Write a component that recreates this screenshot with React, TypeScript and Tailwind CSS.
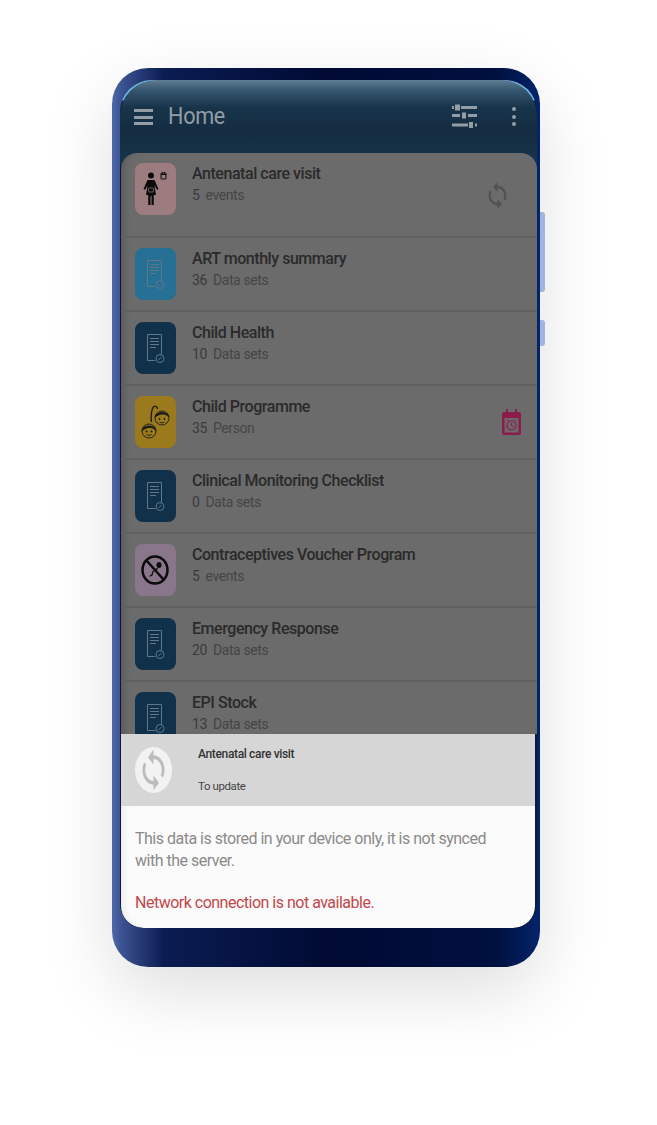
import React from 'react';

const SYNC_PATH =
  'M12 4V1L8 5l4 4V6c3.31 0 6 2.69 6 6 0 1.01-.25 1.97-.7 2.8l1.46 1.46C19.54 15.03 20 13.57 20 12c0-4.42-3.58-8-8-8zm0 14c-3.31 0-6-2.69-6-6 0-1.01.25-1.97.7-2.8L5.24 7.74C4.46 8.97 4 10.43 4 12c0 4.42 3.58 8 8 8v3l4-4-4-4v3z';

const SyncIcon = ({ className }: { className: string }) => (
  <svg viewBox="0 0 24 24" preserveAspectRatio="none" className={className} fill="currentColor">
    <path d={SYNC_PATH} />
  </svg>
);

const DocIcon = () => (
  <svg viewBox="0 0 41 52" className="w-full h-full" fill="none" stroke="#5f7789" strokeWidth="1">
    <path d="M12.500 12.500h14v20M20.500 38.500h-8v-26" />
    <path d="M15 16.500h9M15 19.500h9M15 22.500h9M15 25.500h6" strokeWidth="1.100" />
    <circle cx="25" cy="36.500" r="4" />
    <path d="M23.500 38l3-3" />
  </svg>
);

const WomanIcon = () => (
  <svg viewBox="0 0 41 52" className="w-full h-full">
    <circle cx="16" cy="12.500" r="3" fill="#0b0b0b" />
    <path
      d="M12.500 17h7l4 9-1.500.8-2.500-4.300 1.500 9.500h-2.200v10h-2.300v-9h-1v9h-2.300V32H11l1.500-9.500-2.500 4.300-1.500-.8z"
      fill="#0b0b0b"
    />
    <path d="M13 26c1.500-1.500 4.500-1.500 6 0l-1 3h-4z" fill="none" stroke="#9c7c7f" strokeWidth="0.700" />
    <rect x="26" y="10" width="5" height="6" rx="0.600" fill="none" stroke="#0b0b0b" strokeWidth="1" />
    <path d="M26 11.500h5M27.500 9v1.500M29.500 9v1.500" stroke="#0b0b0b" strokeWidth="1" />
  </svg>
);

const KidsIcon = () => (
  <svg viewBox="0 0 41 52" className="w-full h-full" fill="none" stroke="#1a1a1a" strokeWidth="0.900">
    <circle cx="27" cy="22" r="7" />
    <path d="M20 21c1-6 13-6 14 0-3-3-5-3-7-3s-4 1-7 3z" fill="#1a1a1a" />
    <path d="M16.500 26c-1-4 0-13 2-15s4 0 4 2" strokeWidth="1.300" />
    <circle cx="14" cy="35" r="7" />
    <path d="M7 34.500c1-6 13-6 14 0-3-3-5-3-7-3s-4 1-7 3z" fill="#1a1a1a" />
    <circle cx="11.500" cy="35.500" r="0.600" fill="#1a1a1a" />
    <circle cx="16.500" cy="35.500" r="0.600" fill="#1a1a1a" />
    <path d="M11.500 38.500c1.500 1 3.500 1 5 0" />
    <circle cx="24.500" cy="23" r="0.600" fill="#1a1a1a" />
    <circle cx="29.500" cy="23" r="0.600" fill="#1a1a1a" />
    <path d="M24.500 26c1.500 1 3.500 1 5 0" />
  </svg>
);

const NoSpermIcon = () => (
  <svg viewBox="0 0 41 52" className="w-full h-full" fill="none" stroke="#0b0b0b">
    <ellipse cx="20" cy="26" rx="12.500" ry="13.500" strokeWidth="2.500" />
    <path d="M11.500 16.500l17 19" strokeWidth="2.500" />
    <ellipse cx="24" cy="21" rx="2.500" ry="3" fill="#0b0b0b" stroke="none" />
    <path d="M22.500 24c-1 3-5 2-5 5s-2 3-3 3" strokeWidth="1.200" />
  </svg>
);

const CalendarClock = () => (
  <svg viewBox="0 0 19 26" className="w-[19px] h-[26px]">
    <path
      d="M2 3h2V0h2v3h7V0h2v3h2a2 2 0 0 1 2 2v19a2 2 0 0 1-2 2H2a2 2 0 0 1-2-2V5a2 2 0 0 1 2-2z"
      fill="#8c1c4c"
    />
    <rect x="2.500" y="9" width="14" height="14.500" fill="#6f666a" />
    <circle cx="9.500" cy="16.500" r="4.500" fill="none" stroke="#8c1c4c" strokeWidth="1.200" />
    <path d="M9.500 14v2.500l2 1.500M5 12l1.500-1.500M14 12l-1.500-1.500" fill="none" stroke="#8c1c4c" strokeWidth="1" />
  </svg>
);

const rows = [
  { title: 'Antenatal care visit', count: '5', unit: 'events', tile: 'bg-[#9c7c7f]', icon: <WomanIcon />, first: true },
  { title: 'ART monthly summary', count: '36', unit: 'Data sets', tile: 'bg-[#266f95]', icon: <DocIcon /> },
  { title: 'Child Health', count: '10', unit: 'Data sets', tile: 'bg-[#113049]', icon: <DocIcon /> },
  { title: 'Child Programme', count: '35', unit: 'Person', tile: 'bg-[#9a7a1c]', icon: <KidsIcon />, calendar: true },
  { title: 'Clinical Monitoring Checklist', count: '0', unit: 'Data sets', tile: 'bg-[#113049]', icon: <DocIcon /> },
  { title: 'Contraceptives Voucher Program', count: '5', unit: 'events', tile: 'bg-[#8a768b]', icon: <NoSpermIcon /> },
  { title: 'Emergency Response', count: '20', unit: 'Data sets', tile: 'bg-[#113049]', icon: <DocIcon /> },
  { title: 'EPI Stock', count: '13', unit: 'Data sets', tile: 'bg-[#113049]', icon: <DocIcon /> },
];

export default function App() {
  return (
    <div className="w-[657px] h-[1125px] bg-white pt-[68px] pl-[112px] overflow-hidden font-['Roboto',sans-serif]">
      {/* phone body */}
      <div className="relative w-[428px] h-[899px] rounded-[36px] pl-2 pr-[3px] pt-3 shadow-[0_24px_70px_rgba(0,0,0,0.13)] bg-[linear-gradient(90deg,#4f69aa_0%,#3d5594_2%,#0b1c52_12%,#000a33_50%,#00103f_90%,#04246c_100%)]">
        {/* side buttons */}
        <div className="absolute left-full top-[144px] w-[5px] h-[80px] rounded-r-[3px] bg-[#a3b4df]" />
        <div className="absolute left-full top-[252px] w-[5px] h-[26px] rounded-r-[3px] bg-[#a3b4df]" />

        {/* screen */}
        <div className="relative w-[417px] h-[848px] rounded-t-[32px] rounded-b-[24px] overflow-hidden flex flex-col bg-[linear-gradient(180deg,#6fb6e0_0px,#6fb6e0_20px,#0b1a38_21px)]">
          <header className="h-[85px] -mb-3 shrink-0 flex items-start pt-[21px] pl-[14px] pr-[21px] rounded-t-[36px] bg-[linear-gradient(180deg,#5f7e95_0%,#36566f_12%,#17344b_32%,#152c41_60%,#16354c_100%)] text-[#929da5]">
            <div className="flex flex-col gap-[3.500px] mt-[8px] w-[19px]">
              <span className="h-[3px] bg-[#929da5]" />
              <span className="h-[3px] bg-[#929da5]" />
              <span className="h-[3px] bg-[#929da5]" />
            </div>
            <h1 className="ml-[15px] text-[24px] leading-[30px] tracking-[-0.3px] scale-x-90 origin-left">Home</h1>
            <svg viewBox="0 0 25 25" className="ml-auto w-[25px] h-[25px] mt-[3px]" fill="#929da5">
              <rect x="0" y="2" width="2" height="3" />
              <rect x="3" y="0.500" width="5" height="6" />
              <rect x="9" y="2" width="16" height="3" />
              <rect x="0" y="10" width="8" height="3" />
              <rect x="10" y="8.500" width="4" height="6" />
              <rect x="16" y="10" width="9" height="3" />
              <rect x="0" y="19.500" width="16" height="3" />
              <rect x="17" y="18" width="4" height="6" />
              <rect x="23" y="19.500" width="2" height="3" />
            </svg>
            <div className="ml-[35px] mt-[6px] flex flex-col gap-[3.500px]">
              <span className="w-[4px] h-[4px] rounded-full bg-[#929da5]" />
              <span className="w-[4px] h-[4px] rounded-full bg-[#929da5]" />
              <span className="w-[4px] h-[4px] rounded-full bg-[#929da5]" />
            </div>
          </header>

          {/* dimmed list */}
          <div className="flex-1 min-h-0 overflow-hidden rounded-t-[16px] bg-[#6b6b6b] ml-px relative shadow-[inset_10px_0_10px_-10px_rgba(0,0,0,0.3)]">
            {rows.map(row => (
              <div
                key={row.title}
                className={`flex items-start pl-[14px] pt-[10px] border-b-2 border-[#606060] ${row.first ? 'h-[85px]' : 'h-[74px]'}`}
              >
                <div className={`w-[41px] h-[52px] shrink-0 rounded-[8px] ${row.tile}`}>{row.icon}</div>
                <div className="ml-4 mt-px">
                  <div className="text-[16px] leading-[20px] font-medium tracking-[-0.45px] text-[#2a2a2a]">{row.title}</div>
                  <div className="mt-[1px] text-[14px] leading-[20px] tracking-[-0.4px] text-[#3a3a3a]">
                    <span>{row.count}</span>
                    <span className="ml-[6px] text-[#454545]">{row.unit}</span>
                  </div>
                </div>
                {row.first && <SyncIcon className="ml-auto mr-[26px] -mt-[9px] self-center w-[27px] h-[29px] text-[#525252]" />}
                {row.calendar && (
                  <div className="ml-auto mr-[16px] -mt-[10px] self-center">
                    <CalendarClock />
                  </div>
                )}
              </div>
            ))}
          </div>

          {/* bottom sheet */}
          <div className="shrink-0 ml-px mr-[2px]">
            <div className="h-[72px] bg-[#d6d6d6] flex items-start pl-[14px] pt-[13px]">
              <div className="w-[37px] h-[46px] rounded-[50%] bg-[#f2f2f2] flex items-center justify-center">
                <SyncIcon className="w-[33px] h-[44px] text-[#bcbcbc]" />
              </div>
              <div className="ml-[26px] -mt-[3px]">
                <div className="text-[12px] leading-[20px] font-medium tracking-[-0.35px] text-[#333333]">Antenatal care visit</div>
                <div className="mt-[12px] text-[11.500px] leading-[20px] tracking-[-0.4px] text-[#444444]">To update</div>
              </div>
            </div>
            <div className="h-[122px] rounded-b-[22px] bg-[#fbfbfb] pl-[14px] pr-[20px] pt-[22px] shadow-[inset_8px_0_10px_-8px_rgba(0,0,0,0.12)]">
              <p className="text-[16px] leading-[22px] tracking-[-0.5px] text-[#8a8a8a]">
                This data is stored in your device only, it is not synced with the server.
              </p>
              <p className="mt-[20px] text-[16px] leading-[22px] tracking-[-0.5px] text-[#c2474b]">Network connection is not available.</p>
            </div>
          </div>
        </div>
      </div>
    </div>
  );
}
